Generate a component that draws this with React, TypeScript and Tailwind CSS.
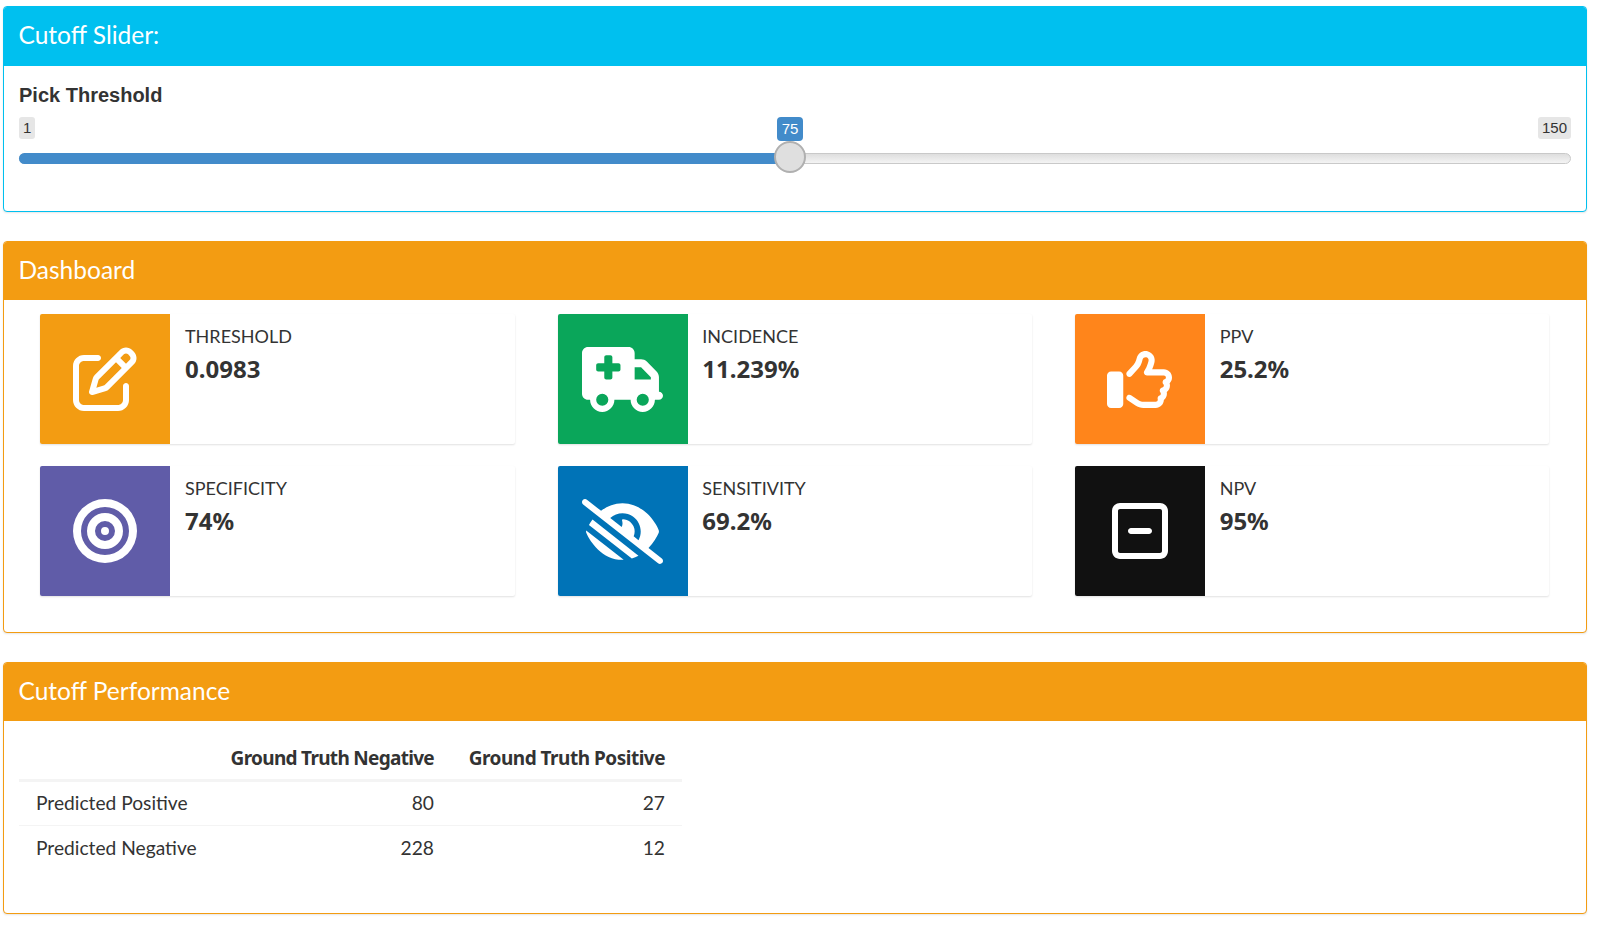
import React from "react";
import { FaRegPenToSquare, FaTruckMedical, FaRegThumbsUp, FaBullseye, FaEyeLowVision, FaRegSquareMinus } from "react-icons/fa6";

const sans = "font-['Lato','Open_Sans',sans-serif]";
const noto = "font-['Noto_Sans',sans-serif]";
const lib = "font-['Liberation_Sans',sans-serif]";

function Box({ title, color, border, className, head, children }: { title: string; color: string; border: string; className: string; head: string; children: React.ReactNode }) {
  return (
    <section className={`ml-[3px] mr-[13px] rounded-[4px] border bg-white overflow-hidden shadow-[0_1px_2px_rgba(0,0,0,0.1)] ${border} ${className}`}>
      <div className={`flex items-center pl-[14.5px] pb-[2px] text-white text-[24.5px] ${sans} ${color} ${head}`}>{title}</div>
      {children}
    </section>
  );
}

function Info({ icon, color, label, value }: { icon: React.ReactNode; color: string; label: string; value: string }) {
  return (
    <div className="flex h-[130px] bg-white rounded-[2px] shadow-[0_1px_2px_rgba(0,0,0,0.12)]">
      <div className={`w-[130px] h-[130px] flex items-center justify-center text-white rounded-l-[2px] ${color}`}>{icon}</div>
      <div className="pl-[14.7px] pt-[9px] text-[#333]">
        <div className={`text-[18px] leading-[26px] ${sans}`}>{label}</div>
        <div className={`mt-[3px] text-[24px] leading-[34px] font-bold ${noto}`}>{value}</div>
      </div>
    </div>
  );
}

export default function App() {
  return (
    <div className="w-[1600px] h-[932px] bg-white pt-[6px] overflow-hidden">
      <Box title="Cutoff Slider:" color="bg-[#00c0ef]" border="border-[#00c0ef]" className="h-[206px]" head="h-[59px]">
        <div className="px-[15px] pt-[16px]">
          <div className={`${lib} font-bold text-[20px] leading-[26px] text-[#333]`}>Pick Threshold</div>
          <div className="relative mt-[9px] h-[46px]">
            <span className={`absolute left-0 top-0 h-[22px] px-[4px] rounded-[3px] bg-[#e6e6e6] text-[#333] text-[15px] leading-[22px] ${lib}`}>1</span>
            <span className={`absolute right-0 top-0 h-[22px] px-[4px] rounded-[3px] bg-[#e6e6e6] text-[#333] text-[15px] leading-[22px] ${lib}`}>150</span>
            <span className={`absolute left-[758px] top-0 w-[26px] h-[24px] rounded-[4px] bg-[#428bca] text-white text-center text-[15px] leading-[24px] ${lib}`}>75</span>
            <div className="absolute left-0 right-0 top-[36px] h-[11px] rounded-full bg-gradient-to-b from-[#dedede] to-[#f4f4f4] border border-[#c9c9c9]" />
            <div className="absolute left-0 w-[771px] top-[36px] h-[11px] rounded-l-full bg-[#428bca]" />
            <div className="absolute left-[755px] top-[24px] w-[32px] h-[32px] rounded-full bg-[#dfdfdf] border-2 border-[#b0b0b0]" />
          </div>
        </div>
      </Box>

      <Box title="Dashboard" color="bg-[#f39c12]" border="border-[#f39c12]" className="h-[392px] mt-[29px]" head="h-[58px]">
        <div className="grid grid-cols-3 gap-x-[43px] gap-y-[22px] pl-[36.3px] pr-[36.7px] pt-[14px]">
          <Info icon={<FaRegPenToSquare size={64} />} color="bg-[#f39c12]" label="THRESHOLD" value="0.0983" />
          <Info icon={<FaTruckMedical size={81} />} color="bg-[#0aa65a]" label="INCIDENCE" value="11.239%" />
          <Info icon={<FaRegThumbsUp size={65} />} color="bg-[#ff851b]" label="PPV" value="25.2%" />
          <Info icon={<FaBullseye size={64} />} color="bg-[#605ca8]" label="SPECIFICITY" value="74%" />
          <Info icon={<FaEyeLowVision size={81} />} color="bg-[#0073b7]" label="SENSITIVITY" value="69.2%" />
          <Info icon={<FaRegSquareMinus size={64} />} color="bg-[#111111]" label="NPV" value="95%" />
        </div>
      </Box>

      <Box title="Cutoff Performance" color="bg-[#f39c12]" border="border-[#f39c12]" className="h-[252px] mt-[29px]" head="h-[58px]">
        <div className={`px-[15px] pt-[15px] text-[#333] text-[19.2px] ${sans}`}>
          <table className="border-collapse table-fixed w-[663px]">
            <thead>
              <tr className="border-b-[3px] border-[#f4f4f4] h-[44px]">
                <th className="w-[195px]"></th>
                <th className={`w-[237px] text-right font-bold pl-0 pr-[17px] pt-[2px] whitespace-nowrap text-[19px] tracking-[-0.7px] ${noto}`}>Ground Truth Negative</th>
                <th className={`w-[231px] text-right font-bold pl-0 pr-[17px] pt-[2px] whitespace-nowrap text-[19px] tracking-[-0.5px] ${noto}`}>Ground Truth Positive</th>
              </tr>
            </thead>
            <tbody>
              <tr className="border-b border-[#f4f4f4] h-[45px]">
                <td className="px-[17px] pt-[1px] whitespace-nowrap">Predicted Positive</td>
                <td className="text-right px-[17px] pt-[1px]">80</td>
                <td className="text-right px-[17px] pt-[1px]">27</td>
              </tr>
              <tr className="h-[45px]">
                <td className="px-[17px] pt-[1px] whitespace-nowrap">Predicted Negative</td>
                <td className="text-right px-[17px] pt-[1px]">228</td>
                <td className="text-right px-[17px] pt-[1px]">12</td>
              </tr>
            </tbody>
          </table>
        </div>
      </Box>
    </div>
  );
}
